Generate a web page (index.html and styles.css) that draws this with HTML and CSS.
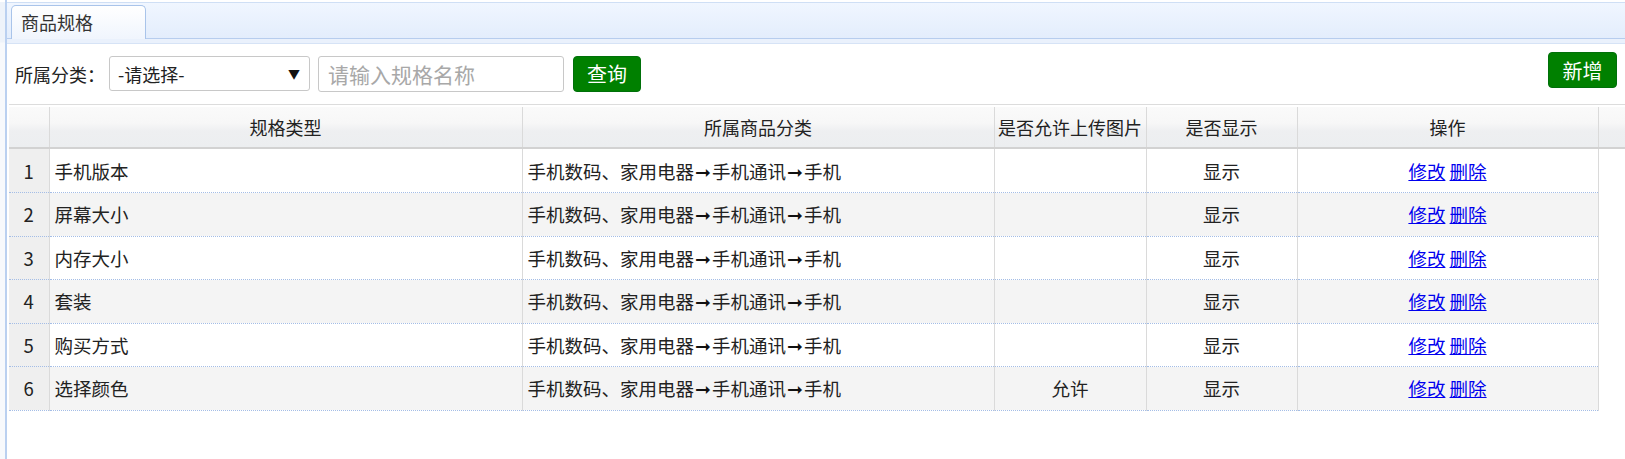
FILE: index.html
```html
<!DOCTYPE html>
<html lang="zh-CN">
<head>
  <meta charset="UTF-8" />
  <title>商品规格</title>
  <link rel="stylesheet" href="styles.css">
</head>
<body>
  <div class="side"></div>
  <div class="main">
    <div class="tabs-header">
      <div class="tab active">商品规格</div>
    </div>

    <div class="panel">
      <div class="toolbar">
        <label class="label">所属分类：</label>
        <div class="select">
          <span>-请选择-</span>
          <span class="arrow">▼</span>
        </div>
        <input class="search" type="text" placeholder="请输入规格名称">
        <button class="btn">查询</button>
        <button class="btn btn-add">新增</button>
      </div>

      <div class="grid">
        <div class="grid-header">
          <table>
            <colgroup>
              <col class="c-num"><col class="c-name"><col class="c-cat"><col class="c-img"><col class="c-show"><col class="c-op">
            </colgroup>
            <tr>
              <th></th>
              <th>规格类型</th>
              <th>所属商品分类</th>
              <th>是否允许上传图片</th>
              <th>是否显示</th>
              <th>操作</th>
            </tr>
          </table>
        </div>

        <table class="grid-body">
          <colgroup>
            <col class="c-num"><col class="c-name"><col class="c-cat"><col class="c-img"><col class="c-show"><col class="c-op">
          </colgroup>
          <tr>
            <td class="num">1</td>
            <td>手机版本</td>
            <td>手机数码、家用电器<span class="arr">➞</span>手机通讯<span class="arr">➞</span>手机</td>
            <td class="center"></td>
            <td class="center">显示</td>
            <td class="center"><a href="#">修改</a> <a href="#">删除</a></td>
          </tr>
          <tr class="alt">
            <td class="num">2</td>
            <td>屏幕大小</td>
            <td>手机数码、家用电器<span class="arr">➞</span>手机通讯<span class="arr">➞</span>手机</td>
            <td class="center"></td>
            <td class="center">显示</td>
            <td class="center"><a href="#">修改</a> <a href="#">删除</a></td>
          </tr>
          <tr>
            <td class="num">3</td>
            <td>内存大小</td>
            <td>手机数码、家用电器<span class="arr">➞</span>手机通讯<span class="arr">➞</span>手机</td>
            <td class="center"></td>
            <td class="center">显示</td>
            <td class="center"><a href="#">修改</a> <a href="#">删除</a></td>
          </tr>
          <tr class="alt">
            <td class="num">4</td>
            <td>套装</td>
            <td>手机数码、家用电器<span class="arr">➞</span>手机通讯<span class="arr">➞</span>手机</td>
            <td class="center"></td>
            <td class="center">显示</td>
            <td class="center"><a href="#">修改</a> <a href="#">删除</a></td>
          </tr>
          <tr>
            <td class="num">5</td>
            <td>购买方式</td>
            <td>手机数码、家用电器<span class="arr">➞</span>手机通讯<span class="arr">➞</span>手机</td>
            <td class="center"></td>
            <td class="center">显示</td>
            <td class="center"><a href="#">修改</a> <a href="#">删除</a></td>
          </tr>
          <tr class="alt">
            <td class="num">6</td>
            <td>选择颜色</td>
            <td>手机数码、家用电器<span class="arr">➞</span>手机通讯<span class="arr">➞</span>手机</td>
            <td class="center">允许</td>
            <td class="center">显示</td>
            <td class="center"><a href="#">修改</a> <a href="#">删除</a></td>
          </tr>
        </table>
      </div>
    </div>
  </div>
</body>
</html>
```

FILE: styles.css
```css
* {
  box-sizing: border-box;
}

body {
  margin: 0;
  height: 459px;
  display: flex;
  font-family: "Noto Sans CJK SC", "Noto Sans", sans-serif;
  color: #222;
  background: #fff;
  overflow: hidden;
}

.side {
  width: 5px;
  background: linear-gradient(#eef3fa 0, #eef3fa 40px, #f7f9fc 41px, #f7f9fc 100%);
  border-top: 2px solid #fff;
}

.main {
  flex: 1;
  border-left: 2px solid #bad0f0;
  display: flex;
  flex-direction: column;
}

.tabs-header {
  margin-top: 2px;
  height: 37px;
  padding-left: 4px;
  border-top: 1px solid #cfdff5;
  border-bottom: 1px solid #b7cdee;
  background: linear-gradient(#f0f6ff, #e3edfc);
  display: flex;
  align-items: flex-end;
}

.tab {
  width: 135px;
  height: 34px;
  padding-left: 9px;
  margin-bottom: -1px;
  line-height: 33px;
  font-size: 18px;
  color: #333;
  border: 1px solid #a9c4ea;
  border-bottom: none;
  border-radius: 5px 5px 0 0;
  background: linear-gradient(#ffffff, #f0f5fd);
}

.panel {
  flex: 1;
  border-top: 4px solid #eaf1fc;
  box-shadow: inset 0 1px 0 #d6e3f6;
}

.toolbar {
  height: 61px;
  padding-left: 8px;
  padding-right: 8px;
  display: flex;
  align-items: center;
}

.label {
  font-size: 18px;
  width: 94px;
  color: #222;
}

.select {
  width: 201px;
  height: 35px;
  border: 1px solid #c8c8c8;
  border-radius: 3px;
  display: flex;
  align-items: center;
  justify-content: space-between;
  padding: 0 9px 0 8px;
  font-size: 18px;
}

.arrow {
  font-size: 12px;
  color: #111;
}

.search {
  margin-left: 8px;
  width: 246px;
  height: 36px;
  border: 1px solid #c8c8c8;
  border-radius: 3px;
  padding: 0 9px;
  font-family: inherit;
  font-size: 21px;
  outline: none;
}

.search::placeholder {
  color: #a8a8a8;
}

.btn {
  margin-left: 9px;
  width: 68px;
  height: 36px;
  border: 1px solid #00700a;
  border-radius: 4px;
  background: #008000;
  color: #fff;
  font-family: inherit;
  font-size: 20px;
  padding: 0;
  cursor: pointer;
}

.btn-add {
  margin-left: auto;
  width: 69px;
  margin-top: -7px;
}

.grid {
  margin-left: 2px;
  border-top: 1px solid #dcdcdc;
  padding-top: 2px;
}

.grid table {
  border-collapse: collapse;
  table-layout: fixed;
  width: 1589px;
}

.c-num { width: 40px; }
.c-name { width: 473px; }
.c-cat { width: 472px; }
.c-img { width: 152px; }
.c-show { width: 151px; }
.c-op { width: 301px; }

.grid-header {
  background: linear-gradient(#fafafa 0, #f7f7f7 40%, #eeeff1 60%, #eceef0 100%);
  border-bottom: 2px solid #d2d2d2;
}

.grid-header th {
  height: 40px;
  font-weight: normal;
  font-size: 18px;
  color: #222;
  border-right: 1px solid #dadada;
  padding: 0;
  white-space: nowrap;
}

.grid-body td {
  height: 43.5px;
  padding: 0 0 0 5px;
  font-size: 18.5px;
  border-right: 1px solid #dadada;
  border-bottom: 1px dotted #a4bde6;
  white-space: nowrap;
}

.grid-body .arr {
  display: inline-block;
  width: 18px;
  text-align: center;
  font-family: "DejaVu Sans", sans-serif;
  font-size: 19px;
  line-height: 1;
  color: #111;
}

.grid-body tr.alt td {
  background: #f4f4f4;
}

.grid-body td.num,
.grid-body tr.alt td.num {
  background: #efefef;
  text-align: center;
  padding: 0;
}

.grid-body td.center {
  text-align: center;
  padding: 0;
}

.grid-body a {
  color: #0000ee;
}
```
